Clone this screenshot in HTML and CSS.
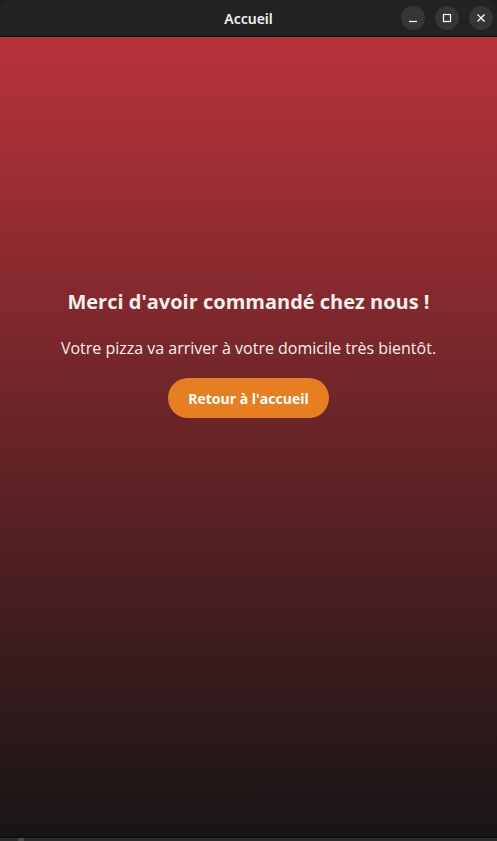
FILE: index.html
```html
<!DOCTYPE html>
<html lang="fr">
<head>
<meta charset="utf-8">
<title>Accueil</title>
<link rel="stylesheet" href="styles.css">
</head>
<body>
<div class="window">
  <header class="titlebar">
    <div class="title">Accueil</div>
    <div class="controls">
      <span class="ctl"><svg width="10" height="10" viewBox="0 0 10 10"><path d="M1 8.5h8" stroke="#fff" stroke-width="1.2"/></svg></span>
      <span class="ctl"><svg width="10" height="10" viewBox="0 0 10 10"><rect x="1.5" y="1.5" width="7" height="7" fill="none" stroke="#fff" stroke-width="1.2"/></svg></span>
      <span class="ctl"><svg width="10" height="10" viewBox="0 0 10 10"><path d="M1.5 1.5l7 7M8.5 1.5l-7 7" stroke="#fff" stroke-width="1.3"/></svg></span>
    </div>
  </header>
  <main class="content">
    <h3 class="heading">Merci d'avoir commandé chez nous !</h3>
    <p class="message">Votre pizza va arriver à votre domicile très bientôt.</p>
    <button class="home-btn">Retour à l'accueil</button>
  </main>
  <footer class="bottom"><span class="grip"></span></footer>
</div>
</body>
</html>
```
FILE: styles.css
```css
html, body {
  margin: 0;
  padding: 0;
  background: #1e1e1e;
}
.window {
  width: 497px;
  height: 841px;
  display: flex;
  flex-direction: column;
  overflow: hidden;
}
.titlebar {
  height: 36px;
  flex: none;
  background: #222222;
  border-bottom: 1px solid #0b0b0b;
  border-radius: 12px 12px 0 0;
  position: relative;
  display: flex;
  align-items: center;
  justify-content: center;
}
.title {
  font-family: "Noto Sans", "Open Sans", sans-serif;
  font-weight: 600;
  font-size: 14px;
  color: #f2f2f2;
}
.controls {
  position: absolute;
  right: 4px;
  top: 6px;
  display: flex;
  gap: 10px;
}
.ctl {
  width: 24px;
  height: 24px;
  border-radius: 50%;
  background: #363636;
  display: flex;
  align-items: center;
  justify-content: center;
}
.content {
  height: 800px;
  flex: none;
  background: linear-gradient(to bottom, #b8333a 0%, #161515 100%);
  display: flex;
  flex-direction: column;
  align-items: center;
  padding-top: 251px;
  box-sizing: border-box;
  font-family: "Open Sans", sans-serif;
  color: #f4f0f0;
}
.heading {
  margin: 0;
  font-size: 20px;
  font-weight: 700;
  line-height: 28px;
}
.message {
  margin: 20px 0 0;
  font-size: 16px;
  line-height: 24px;
}
.home-btn {
  margin-top: 18px;
  width: 161px;
  height: 40px;
  border: none;
  border-radius: 20px;
  background: #e67e22;
  color: #ffffff;
  font-family: "Open Sans", sans-serif;
  font-weight: 700;
  font-size: 14px;
}
.bottom {
  flex: 1;
  background: #2b2b2b;
  border-top: 1px solid #0b0b0b;
  position: relative;
}
.grip {
  position: absolute;
  left: 18px;
  top: 0;
  width: 6px;
  height: 3px;
  background: #4a4a4a;
}
```
